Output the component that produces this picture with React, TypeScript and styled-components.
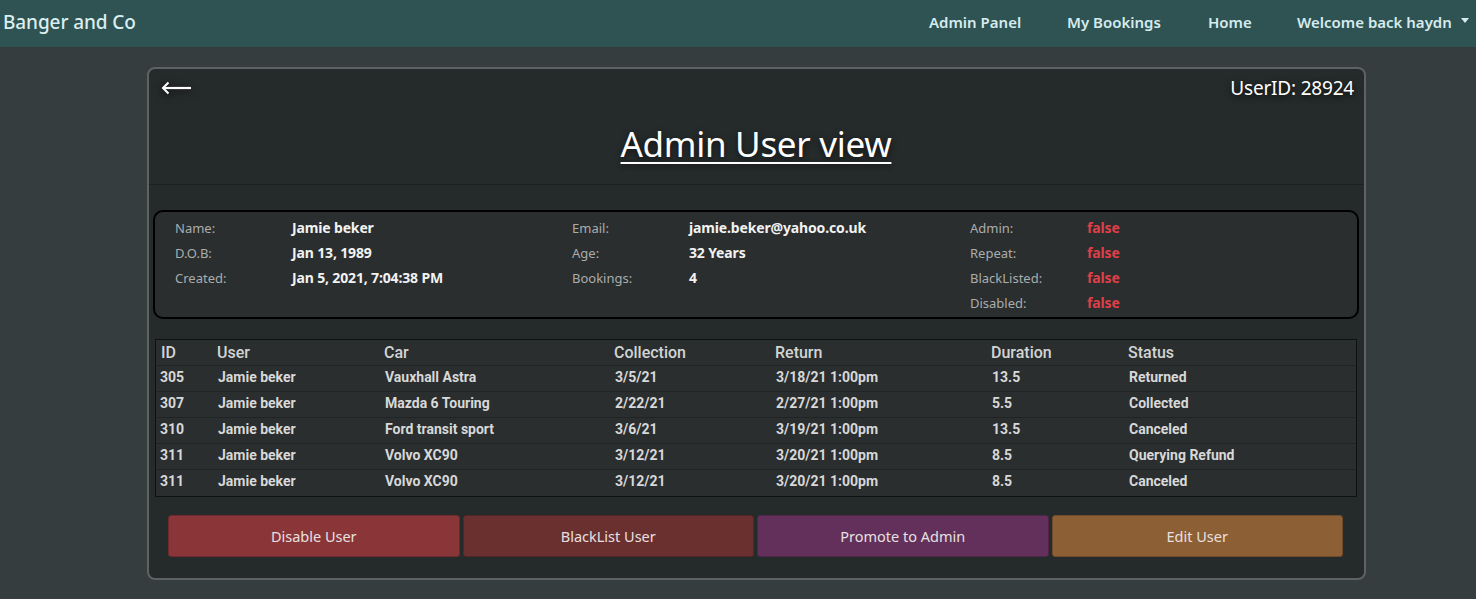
import React from "react";
import styled, { createGlobalStyle } from "styled-components";

const Global = createGlobalStyle`
  html, body { margin: 0; padding: 0; background: #363d3e; }
  body { font-family: "Noto Sans", "Open Sans", sans-serif; color: #e6e6e6; }
  * { box-sizing: border-box; }
`;

const Nav = styled.nav`
  height: 47px;
  background: #2f5252;
  display: flex;
  align-items: center;
  justify-content: space-between;
  padding: 0 8px 3px 3px;
`;

const Brand = styled.div`
  font-size: 19px;
  font-weight: 500;
  color: #d9eef0;
  letter-spacing: -0.1px;
`;

const NavLinks = styled.div`
  display: flex;
  align-items: center;
`;

const NavLink = styled.a<{ $w: number }>`
  width: ${(p) => p.$w}px;
  font-size: 15px;
  font-weight: 600;
  color: #d5ecef;
  text-decoration: none;
  white-space: nowrap;
  display: flex;
  align-items: center;
`;

const Caret = styled.span`
  display: inline-block;
  margin-left: 9px;
  width: 0;
  height: 0;
  border-left: 4px solid transparent;
  border-right: 4px solid transparent;
  border-top: 5px solid #d5ecef;
  transform: translateY(-2px);
`;

const Page = styled.main`
  padding: 20px 0 0 147px;
`;

const Card = styled.section`
  width: 1219px;
  height: 513px;
  background: #252a2a;
  border: 2px solid #5e6263;
  border-radius: 8px;
  display: flex;
  flex-direction: column;
`;

const CardHeader = styled.header`
  height: 116px;
  border-bottom: 1px solid #1c2020;
  display: grid;
  grid-template-columns: 1fr auto 1fr;
  padding: 6px 10px 0 9px;
`;

const BackButton = styled.button`
  background: none;
  border: none;
  padding: 0;
  width: 36px;
  height: 28px;
  cursor: pointer;
  align-self: start;
  filter: drop-shadow(0 2px 4px rgba(0, 0, 0, 0.8));
`;

const Title = styled.h1`
  margin: 45px 0 0 0;
  font-size: 35px;
  font-weight: 400;
  color: #ffffff;
  text-decoration: underline;
  text-decoration-thickness: 2px;
  text-underline-offset: 5px;
  text-shadow: 0 2px 6px rgba(0, 0, 0, 0.6);
  letter-spacing: -0.3px;
`;

const UserId = styled.div`
  justify-self: end;
  font-size: 19px;
  color: #ffffff;
  text-shadow: 0 2px 6px rgba(0, 0, 0, 0.8);
  margin-top: 0;
  letter-spacing: -0.2px;
`;

const Body = styled.div`
  padding: 25px 5px 0 4px;
  display: flex;
  flex-direction: column;
`;

const InfoBox = styled.div`
  height: 109px;
  background: #2a2e2f;
  border: 2px solid #000;
  border-radius: 10px;
  display: grid;
  grid-template-columns: 397px 398px 1fr;
  padding: 3px 0 0 20px;
`;

const InfoCol = styled.div`
  display: grid;
  grid-template-columns: 117px 1fr;
  grid-auto-rows: 25px;
  align-items: center;
`;

const Label = styled.span`
  font-size: 13px;
  color: #a9adad;
`;

const Value = styled.span<{ $red?: boolean }>`
  font-size: 14px;
  font-weight: 700;
  color: ${(p) => (p.$red ? "#df3f47" : "#f2f2f2")};
  letter-spacing: -0.15px;
`;

const Table = styled.div`
  margin: 20px 2px 0 2px;
  border: 1px solid #0e1011;
  background: #2a2e2f;
  font-family: Roboto, "Liberation Sans", sans-serif;
`;

const cols = "56px 167px 230px 161px 216px 137px 1fr";

const HeadRow = styled.div`
  display: grid;
  grid-template-columns: ${cols};
  height: 26px;
  align-items: center;
  padding-left: 5px;
  padding-bottom: 1px;
  border-bottom: 1px solid #202424;
`;

const HeadCell = styled.span`
  font-size: 16px;
  font-weight: 500;
  color: #d2d4d4;
`;

const Row = styled.div<{ $last?: boolean }>`
  display: grid;
  grid-template-columns: ${cols};
  height: 26px;
  align-items: center;
  padding-left: 4px;
  padding-bottom: 4px;
  border-bottom: ${(p) => (p.$last ? "none" : "1px solid #202424")};
`;

const Cell = styled.span<{ $first?: boolean }>`
  font-size: 14px;
  font-weight: 700;
  color: #d8d8d8;
  padding-left: ${(p) => (p.$first ? 0 : 2)}px;
`;

const Actions = styled.div`
  display: grid;
  grid-template-columns: repeat(4, 1fr);
  gap: 3px;
  padding: 18px 16px 0 15px;
`;

const ActionButton = styled.button<{ $bg: string; $border: string }>`
  height: 42px;
  background: ${(p) => p.$bg};
  border: 1px solid ${(p) => p.$border};
  border-radius: 3px;
  color: #e8e0e0;
  font-family: "Noto Sans", "Open Sans", sans-serif;
  font-size: 14.5px;
  cursor: pointer;
`;

const bookings = [
  ["305", "Jamie beker", "Vauxhall Astra", "3/5/21", "3/18/21 1:00pm", "13.5", "Returned"],
  ["307", "Jamie beker", "Mazda 6 Touring", "2/22/21", "2/27/21 1:00pm", "5.5", "Collected"],
  ["310", "Jamie beker", "Ford transit sport", "3/6/21", "3/19/21 1:00pm", "13.5", "Canceled"],
  ["311", "Jamie beker", "Volvo XC90", "3/12/21", "3/20/21 1:00pm", "8.5", "Querying Refund"],
  ["311", "Jamie beker", "Volvo XC90", "3/12/21", "3/20/21 1:00pm", "8.5", "Canceled"],
];

export default function App() {
  return (
    <>
      <Global />
      <Nav>
        <Brand>Banger and Co</Brand>
        <NavLinks>
          <NavLink $w={138}>Admin Panel</NavLink>
          <NavLink $w={141}>My Bookings</NavLink>
          <NavLink $w={89}>Home</NavLink>
          <NavLink $w={171}>
            Welcome back haydn<Caret />
          </NavLink>
        </NavLinks>
      </Nav>
      <Page>
        <Card>
          <CardHeader>
            <BackButton aria-label="Back">
              <svg width="32" height="20" viewBox="0 0 32 20">
                <path d="M3 10 H31" stroke="#fff" strokeWidth="2.2" fill="none" />
                <path d="M8.5 4.5 L3 10 L8.5 15.5" stroke="#fff" strokeWidth="2" fill="none" />
              </svg>
            </BackButton>
            <Title>Admin User view</Title>
            <UserId>UserID: 28924</UserId>
          </CardHeader>
          <Body>
            <InfoBox>
              <InfoCol>
                <Label>Name:</Label>
                <Value>Jamie beker</Value>
                <Label>D.O.B:</Label>
                <Value>Jan 13, 1989</Value>
                <Label>Created:</Label>
                <Value>Jan 5, 2021, 7:04:38 PM</Value>
              </InfoCol>
              <InfoCol>
                <Label>Email:</Label>
                <Value>jamie.beker@yahoo.co.uk</Value>
                <Label>Age:</Label>
                <Value>32 Years</Value>
                <Label>Bookings:</Label>
                <Value>4</Value>
              </InfoCol>
              <InfoCol>
                <Label>Admin:</Label>
                <Value $red>false</Value>
                <Label>Repeat:</Label>
                <Value $red>false</Value>
                <Label>BlackListed:</Label>
                <Value $red>false</Value>
                <Label>Disabled:</Label>
                <Value $red>false</Value>
              </InfoCol>
            </InfoBox>
            <Table>
              <HeadRow>
                {["ID", "User", "Car", "Collection", "Return", "Duration", "Status"].map((h) => (
                  <HeadCell key={h}>{h}</HeadCell>
                ))}
              </HeadRow>
              {bookings.map((b, i) => (
                <Row key={i} $last={i === bookings.length - 1}>
                  {b.map((c, j) => (
                    <Cell key={j} $first={j === 0}>
                      {c}
                    </Cell>
                  ))}
                </Row>
              ))}
            </Table>
            <Actions>
              <ActionButton $bg="#8a3638" $border="#6e2a2c">Disable User</ActionButton>
              <ActionButton $bg="#6a3030" $border="#552626">BlackList User</ActionButton>
              <ActionButton $bg="#62305a" $border="#4e2648">Promote to Admin</ActionButton>
              <ActionButton $bg="#8c5f34" $border="#704c2a">Edit User</ActionButton>
            </Actions>
          </Body>
        </Card>
      </Page>
    </>
  );
}
